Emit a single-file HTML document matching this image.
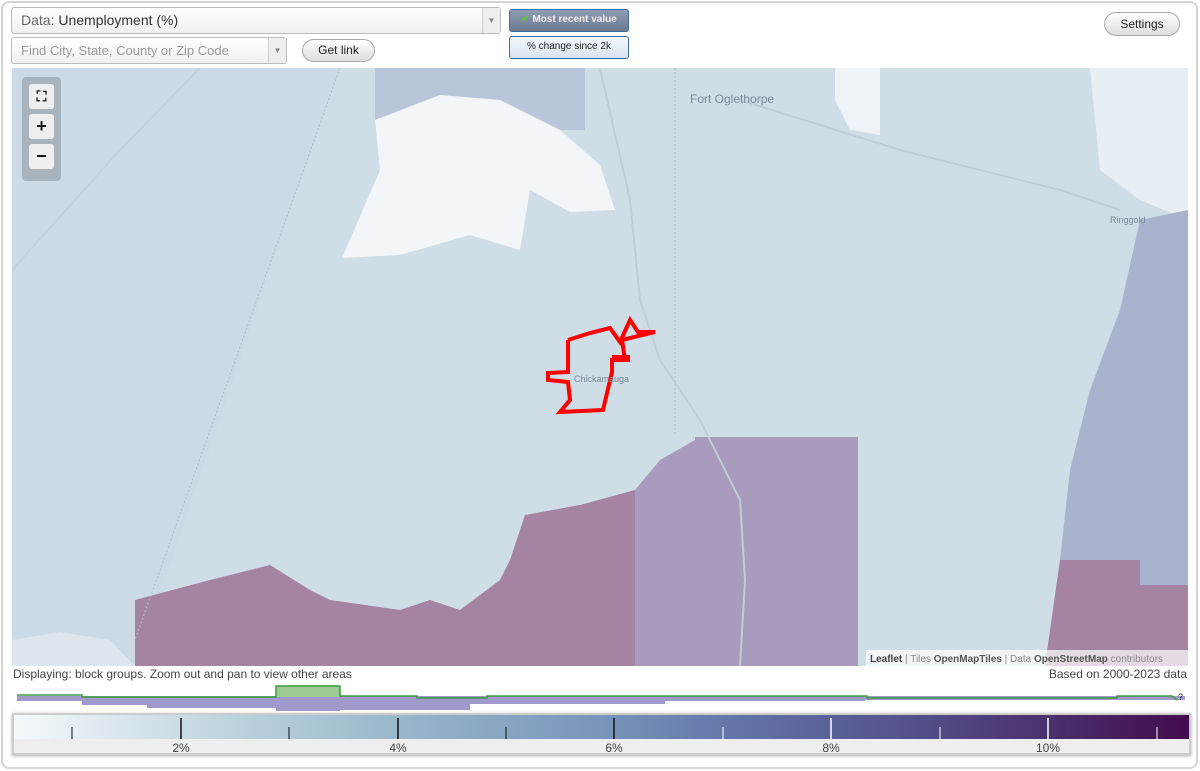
<!DOCTYPE html>
<html><head><meta charset="utf-8"><style>
*{box-sizing:border-box}
body{margin:0;width:1200px;height:771px;background:#fff;font-family:"Liberation Sans",Arial,sans-serif;overflow:hidden;position:relative}
.frame{position:absolute;left:1px;top:1px;width:1197px;height:768px;border:2px solid #d4d4d4;border-radius:8px}
.sel{position:absolute;border:1px solid #bbb;border-radius:3px;background:linear-gradient(#fff,#f0f0f0);font-size:14px;color:#333}
.arrow{position:absolute;right:0;top:0;bottom:0;width:18px;border-left:1px solid #ccc;background:#eee;font-size:8px;color:#888;text-align:center}
.btn{position:absolute;border:1px solid #aaa;border-radius:12px;background:linear-gradient(#fff,#ddd);font-size:12px;color:#222;text-align:center}
.tog{position:absolute;left:509px;width:120px;height:23px;border:1px solid #3a6ea5;border-radius:3px;font-size:10px;text-align:center;line-height:20px}
.zb{position:absolute;left:29px;width:25px;height:25px;background:#eee;border-radius:3px;font-weight:bold;text-align:center;line-height:25px;font-size:18px;color:#111}
</style></head><body>
<div class="frame"></div>
<div class="sel" style="left:11px;top:7px;width:490px;height:27px;line-height:25px;padding-left:9px"><span style="color:#666">Data:</span> Unemployment (%)<div class="arrow" style="line-height:25px">▼</div></div>
<div class="sel" style="left:11px;top:37px;width:276px;height:27px;line-height:25px;padding-left:9px;color:#999;font-size:13px">Find City, State, County or Zip Code<div class="arrow" style="line-height:25px">▼</div></div>
<div class="btn" style="left:302px;top:39px;width:73px;height:23px;line-height:21px">Get link</div>
<div class="tog" style="top:9px;background:linear-gradient(#8f9cb3,#6c7a92);color:#eee;font-weight:bold"><span style="color:#5c3">✔</span> Most recent value</div>
<div class="tog" style="top:36px;background:linear-gradient(#f4f8fc,#d8e4f0);color:#222">% change since 2k</div>
<div class="btn" style="left:1104px;top:12px;width:76px;height:24px;line-height:22px">Settings</div>

<svg style="position:absolute;left:12px;top:68px" width="1176" height="598" viewBox="12 68 1176 598">
<rect x="12" y="68" width="1176" height="598" fill="#cfdde6"/>
<polygon points="375,68 585,68 585,130 560,130 500,100 440,95 375,120" fill="#b9c5d8"/>
<polygon points="12,68 340,68 135,666 12,666" fill="#ccdae5"/>
<polygon points="375,120 440,95 500,100 560,130 600,165 615,210 570,212 530,190 520,250 470,235 400,255 342,258 380,170" fill="#f2f6f9"/>
<polygon points="835,68 880,68 880,135 850,130 835,100" fill="#eef3f7"/>
<polygon points="1090,68 1188,68 1188,220 1140,200 1100,170" fill="#e8eff4"/>
<polygon points="1140,220 1188,210 1188,666 1045,666 1060,560 1070,470 1090,390 1120,310" fill="#aab3cd"/>
<polygon points="12,640 60,632 110,640 135,666 12,666" fill="#dbe6ee"/>
<polygon points="635,490 660,460 695,440 695,437 858,437 858,666 635,666" fill="#a99bbd"/>
<polygon points="135,666 135,600 210,580 270,565 310,590 330,600 400,610 430,600 460,610 500,580 510,560 525,515 580,505 635,490 635,666" fill="#a583a3"/>
<polygon points="1060,560 1140,560 1140,585 1188,585 1188,666 1045,666" fill="#a583a3"/>
<polyline points="675,68 675,436" stroke="#b3bccb" stroke-dasharray="2,2" fill="none"/>
<polyline points="340,68 135,640" stroke="#b3bccb" stroke-dasharray="2,2" fill="none"/>
<polyline points="600,68 630,200 640,300 660,360 700,420 740,500 745,580 740,666" stroke="#c0ccd6" stroke-width="2" fill="none"/>
<polyline points="740,100 900,150 1060,190 1120,210" stroke="#c0ccd6" stroke-width="2" fill="none"/>
<polyline points="12,270 120,150 200,68" stroke="#c4d0da" stroke-width="1.5" fill="none"/>
<polyline points="568,340 590,333 610,328 620,342 630,320 638,332 655,332 622,340 625,360 612,360 612,372 603,410 560,412 570,400 568,382 548,380 548,373 568,372 568,340" stroke="#f00" stroke-width="4" fill="none"/>
<rect x="612" y="355" width="18" height="7" fill="#f00"/>
<text x="690" y="103" font-size="12" fill="#7b8a99" font-family="Liberation Sans">Fort Oglethorpe</text>
<text x="1110" y="223" font-size="9" fill="#7b8a99" font-family="Liberation Sans">Ringgold</text>
<text x="574" y="382" font-size="9" fill="#7b8a99" font-family="Liberation Sans">Chickamauga</text>
<rect x="866" y="650" width="322" height="16" fill="#fff" opacity=".7"/>
<text x="870" y="662" font-size="10" fill="#888" font-family="Liberation Sans"><tspan fill="#444" font-weight="bold">Leaflet</tspan> | Tiles <tspan fill="#555" font-weight="bold">OpenMapTiles</tspan> | Data <tspan fill="#555" font-weight="bold">OpenStreetMap</tspan> contributors</text>
</svg>
<div style="position:absolute;left:22px;top:77px;width:39px;height:104px;background:rgba(130,140,150,.5);border-radius:4px"></div>
<div class="zb" style="top:84px;font-size:14px">⛶</div>
<div class="zb" style="top:114px">+</div>
<div class="zb" style="top:144px">−</div>

<div style="position:absolute;left:13px;top:667px;font-size:12px;color:#444">Displaying: block groups. Zoom out and pan to view other areas</div>
<div style="position:absolute;right:13px;top:667px;font-size:12px;color:#444">Based on 2000-2023 data</div>
<svg style="position:absolute;left:0;top:684px" width="1200" height="30">
<g fill="#9f99cc">
<rect x="17" y="12" width="65" height="5"/>
<rect x="82" y="12" width="65" height="9"/>
<rect x="147" y="12" width="129" height="12"/>
<rect x="276" y="13" width="64" height="14"/>
<rect x="340" y="12" width="130" height="14"/>
<rect x="470" y="12" width="195" height="8"/>
<rect x="665" y="12" width="200" height="5"/>
<rect x="865" y="12" width="320" height="4"/>
</g>
<rect x="276" y="2" width="64" height="11" fill="#9ccb94"/>
<polyline points="17,11 82,11 82,13 276,13 276,2 340,2 340,12 417,12 417,14 487,14 487,12 867,12 867,14 1117,14 1117,12 1172,12 1177,16" stroke="#3c9a3c" stroke-width="1.5" fill="none"/>
<text x="1178" y="16" font-size="9" fill="#222">?</text>
</svg>
<div style="position:absolute;left:12px;top:713px;width:1179px;height:42px;border:2px solid #ccc;background:#eee;box-shadow:0 1px 3px #aaa"></div>
<div style="position:absolute;left:14px;top:715px;width:1175px;height:24px;background:linear-gradient(90deg,#f5fafb,#b8d0dc 20%,#93b3c9 35%,#7895ba 50%,#6273a8 62%,#55548f 75%,#4a316e 88%,#430a4f)"></div>
<svg style="position:absolute;left:14px;top:715px" width="1175" height="40">
<g stroke="#111"><line x1="58" y1="12" x2="58" y2="24"/><line x1="167" y1="3" x2="167" y2="24" stroke-width="1.5"/><line x1="275" y1="12" x2="275" y2="24"/><line x1="384" y1="3" x2="384" y2="24" stroke-width="1.5"/><line x1="492" y1="12" x2="492" y2="24"/><line x1="600" y1="3" x2="600" y2="24" stroke-width="1.5"/></g>
<g stroke="#fff"><line x1="709" y1="12" x2="709" y2="24"/><line x1="817" y1="3" x2="817" y2="24" stroke-width="1.5"/><line x1="926" y1="12" x2="926" y2="24"/><line x1="1034" y1="3" x2="1034" y2="24" stroke-width="1.5"/><line x1="1143" y1="12" x2="1143" y2="24"/></g>
<g font-size="12" fill="#444" text-anchor="middle"><text x="167" y="37">2%</text><text x="384" y="37">4%</text><text x="600" y="37">6%</text><text x="817" y="37">8%</text><text x="1034" y="37">10%</text></g>
</svg>
</body></html>
